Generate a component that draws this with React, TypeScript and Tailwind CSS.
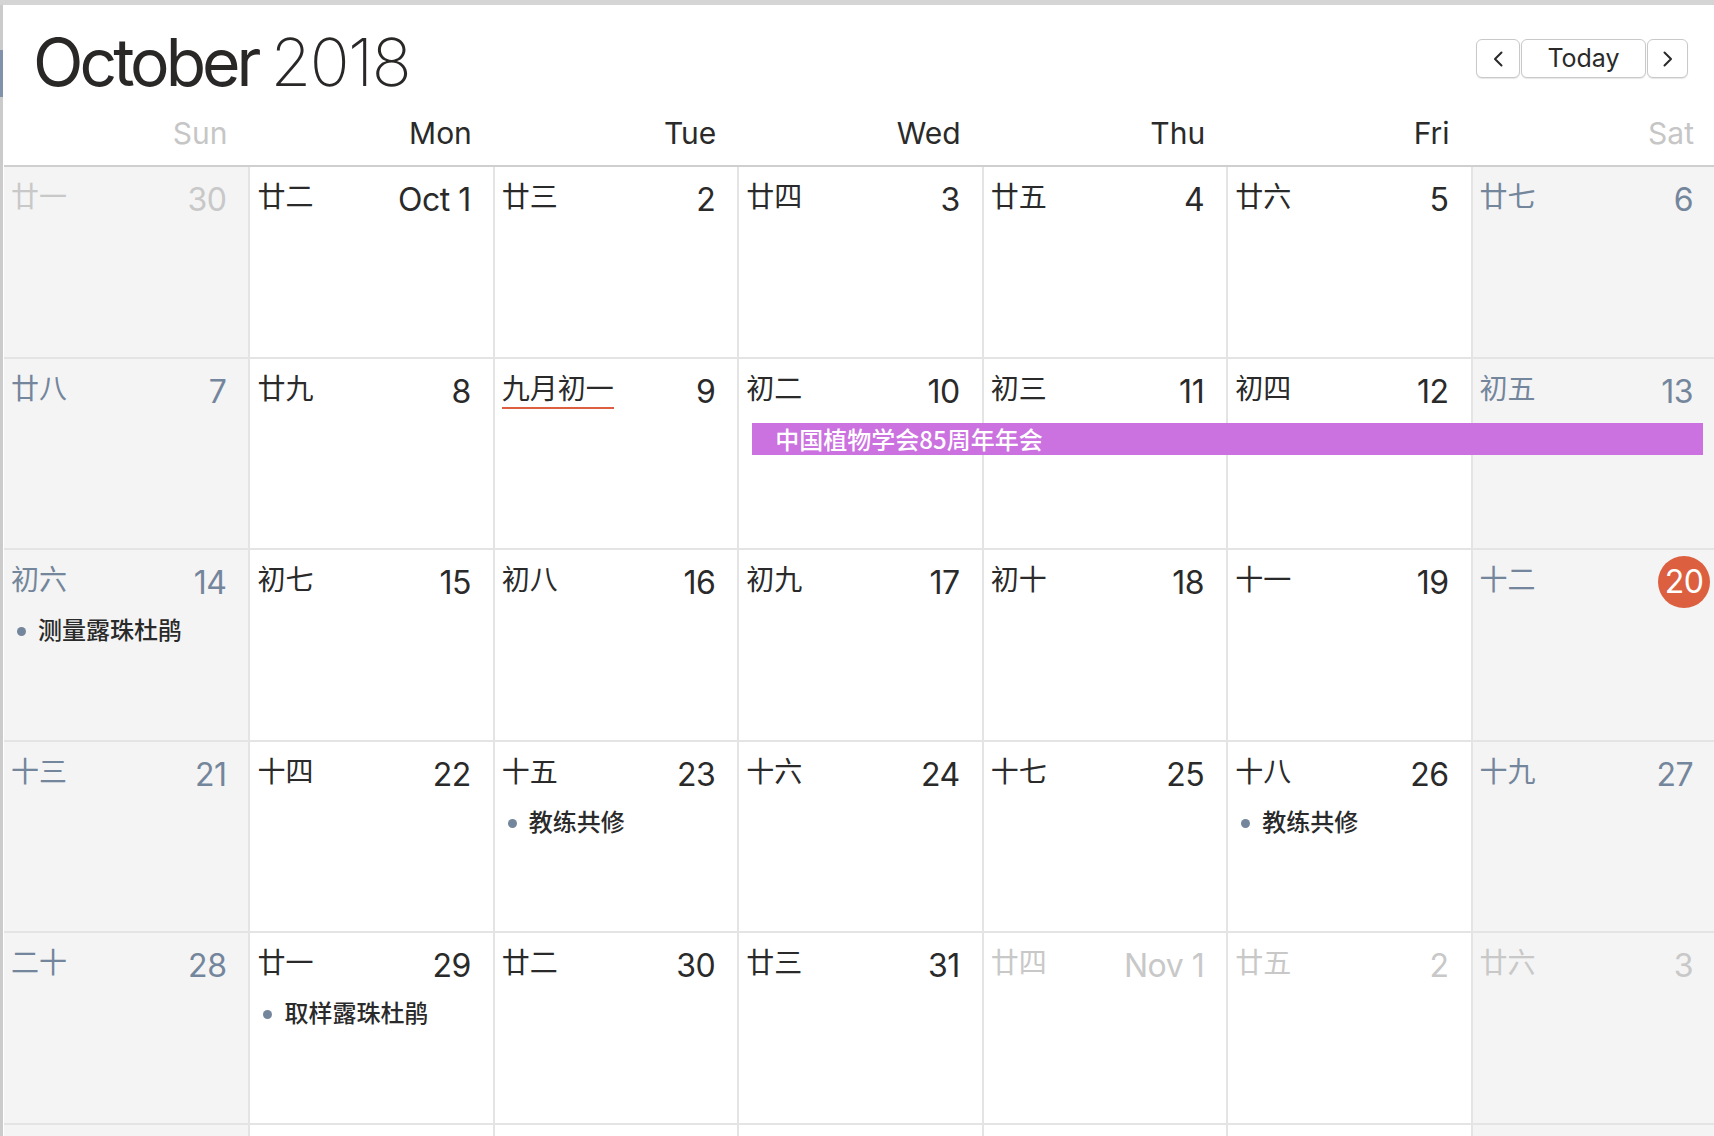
import React from "react";

type Day = {
  n: string;
  lunar: string;
  other?: boolean;
  weekend?: boolean;
  today?: boolean;
  underline?: boolean;
  events?: string[];
  hidden?: boolean;
};

const mk = (
  n: string,
  lunar: string,
  col: number,
  opts: Partial<Day> = {}
): Day => ({ n, lunar, weekend: col === 0 || col === 6, ...opts });

const rowsRaw: [string, string, Partial<Day>?][][] = [
  [
    ["30", "廿一", { other: true }],
    ["Oct 1", "廿二"],
    ["2", "廿三"],
    ["3", "廿四"],
    ["4", "廿五"],
    ["5", "廿六"],
    ["6", "廿七"],
  ],
  [
    ["7", "廿八"],
    ["8", "廿九"],
    ["9", "九月初一", { underline: true }],
    ["10", "初二"],
    ["11", "初三"],
    ["12", "初四"],
    ["13", "初五"],
  ],
  [
    ["14", "初六", { events: ["测量露珠杜鹃"] }],
    ["15", "初七"],
    ["16", "初八"],
    ["17", "初九"],
    ["18", "初十"],
    ["19", "十一"],
    ["20", "十二", { today: true }],
  ],
  [
    ["21", "十三"],
    ["22", "十四"],
    ["23", "十五", { events: ["教练共修"] }],
    ["24", "十六"],
    ["25", "十七"],
    ["26", "十八", { events: ["教练共修"] }],
    ["27", "十九"],
  ],
  [
    ["28", "二十"],
    ["29", "廿一", { events: ["取样露珠杜鹃"] }],
    ["30", "廿二"],
    ["31", "廿三"],
    ["Nov 1", "廿四", { other: true }],
    ["2", "廿五", { other: true }],
    ["3", "廿六", { other: true }],
  ],
  [
    ["4", "", { other: true, hidden: true }],
    ["5", "", { other: true, hidden: true }],
    ["6", "", { other: true, hidden: true }],
    ["7", "", { other: true, hidden: true }],
    ["8", "", { other: true, hidden: true }],
    ["9", "", { other: true, hidden: true }],
    ["10", "", { other: true, hidden: true }],
  ],
];

const weeks: Day[][] = rowsRaw.map((r) =>
  r.map(([n, l, o], i) => mk(n, l, i, o || {}))
);

const dayNames = ["Sun", "Mon", "Tue", "Wed", "Thu", "Fri", "Sat"];

function Cell({ d, idx }: { d: Day; idx: number }) {
  const color = d.other
    ? "text-[#c8c8c8]"
    : d.weekend
    ? "text-[#74869c]"
    : "text-[#2a2a2a]";
  return (
    <div
      className={`h-full flex flex-col ${idx > 0 ? "border-l-2" : ""} border-[#e4e4e4] ${
        d.weekend ? "bg-[#f4f4f4]" : "bg-white"
      }`}
    >
      {!d.hidden && (
        <div className="h-[63px] flex justify-between items-start">
          <span
            className={`ml-[7px] mt-[14px] text-[28px] leading-none font-['Noto_Sans_CJK_SC',sans-serif] ${color} ${
              d.underline ? "border-b-2 border-[#dc603f] pb-[6px]" : ""
            }`}
          >
            {d.lunar}
          </span>
          {d.today ? (
            <span className="mr-[5px] mt-[6px] w-[52px] h-[52px] rounded-full bg-[#dc603f] text-white flex items-center justify-center text-[32px] leading-none font-['Inter',sans-serif] tracking-[-0.5px]">
              {d.n}
            </span>
          ) : (
            <span
              className={`mr-[22px] mt-[17px] text-[32px] leading-none font-['Inter',sans-serif] tracking-[-0.5px] ${color}`}
            >
              {d.n}
            </span>
          )}
        </div>
      )}
      {d.events?.map((e) => (
        <div key={e} className="flex items-start h-[32px]">
          <span className="ml-[13px] mt-[14px] w-[9px] h-[9px] rounded-full bg-[#74869c]" />
          <span className="ml-[12px] text-[24px] leading-[32px] font-medium text-[#2a2a2a] font-['Noto_Sans_CJK_SC',sans-serif]">
            {e}
          </span>
        </div>
      ))}
    </div>
  );
}

function Chevron({ dir }: { dir: "left" | "right" }) {
  return (
    <svg width="11" height="16" viewBox="0 0 11 16" fill="none">
      <path
        d={dir === "left" ? "M8.5 1.5 L2 8 L8.5 14.5" : "M2.5 1.5 L9 8 L2.5 14.5"}
        stroke="#2a2a2a"
        strokeWidth="2"
        strokeLinecap="round"
        strokeLinejoin="round"
      />
    </svg>
  );
}

export default function App() {
  return (
    <div className="w-[1714px] h-[1136px] overflow-hidden bg-white flex flex-col">
      <div className="h-[5px] shrink-0 bg-[#d5d5d5]" />
      <div className="flex flex-1 min-h-0">
        <div className="w-[3px] shrink-0 bg-[#cbcbcb] flex flex-col">
          <div className="h-[45px]" />
          <div className="h-[47px] bg-[#8193ab]" />
        </div>
        <div className="w-[1711px] shrink-0 ml-[1px] flex flex-col">
          {/* Header */}
          <div className="h-[162px] shrink-0 border-b-2 border-[#cfcfcf] flex flex-col">
            <div className="mt-[24px] h-[66px] flex justify-between items-start pl-[29px] pr-[27px]">
              <h1 className="text-[66px] leading-none text-[#2a2727] font-['Inter',sans-serif] whitespace-nowrap">
                <span className="font-normal tracking-[-4px]">October</span>
                <span className="inline-block w-[13px]" />
                <span className="font-extralight tracking-[-1.5px]">2018</span>
              </h1>
              <div className="mt-[10px] flex gap-[1px]">
                <button className="w-[44px] h-[39px] rounded-[6px] border border-[#c9c9c9] bg-white shadow-[0_1px_1px_rgba(0,0,0,0.1)] flex items-center justify-center">
                  <Chevron dir="left" />
                </button>
                <button className="w-[125px] h-[39px] rounded-[6px] border border-[#c9c9c9] bg-white shadow-[0_1px_1px_rgba(0,0,0,0.1)] text-[25px] leading-none text-[#2a2a2a] font-['Inter',sans-serif] flex items-center justify-center">
                  Today
                </button>
                <button className="w-[41px] h-[39px] rounded-[6px] border border-[#c9c9c9] bg-white shadow-[0_1px_1px_rgba(0,0,0,0.1)] flex items-center justify-center">
                  <Chevron dir="right" />
                </button>
              </div>
            </div>
            <div className="mt-[23px] grid grid-cols-7">
              {dayNames.map((n, i) => (
                <div
                  key={n}
                  className={`text-right pr-[21px] text-[30px] leading-none font-['Inter',sans-serif] ${
                    i === 0 || i === 6 ? "text-[#c6c6c6]" : "text-[#2a2a2a]"
                  }`}
                >
                  {n}
                </div>
              ))}
            </div>
          </div>
          {/* Weeks */}
          {weeks.map((w, wi) => (
            <div
              key={wi}
              className="relative h-[191.6px] shrink-0 border-b-2 border-[#e4e4e4] grid grid-cols-7"
            >
              {w.map((d, i) => (
                <Cell key={i} d={d} idx={i} />
              ))}
              {wi === 1 && (
                <div className="absolute top-[64px] h-[32px] left-[calc(42.857%+15px)] right-[12px] bg-[#cb72e0] pl-[23px] text-[24px] leading-[32px] font-medium text-white font-['Noto_Sans_CJK_SC',sans-serif]">
                  中国植物学会85周年年会
                </div>
              )}
            </div>
          ))}
        </div>
      </div>
    </div>
  );
}
